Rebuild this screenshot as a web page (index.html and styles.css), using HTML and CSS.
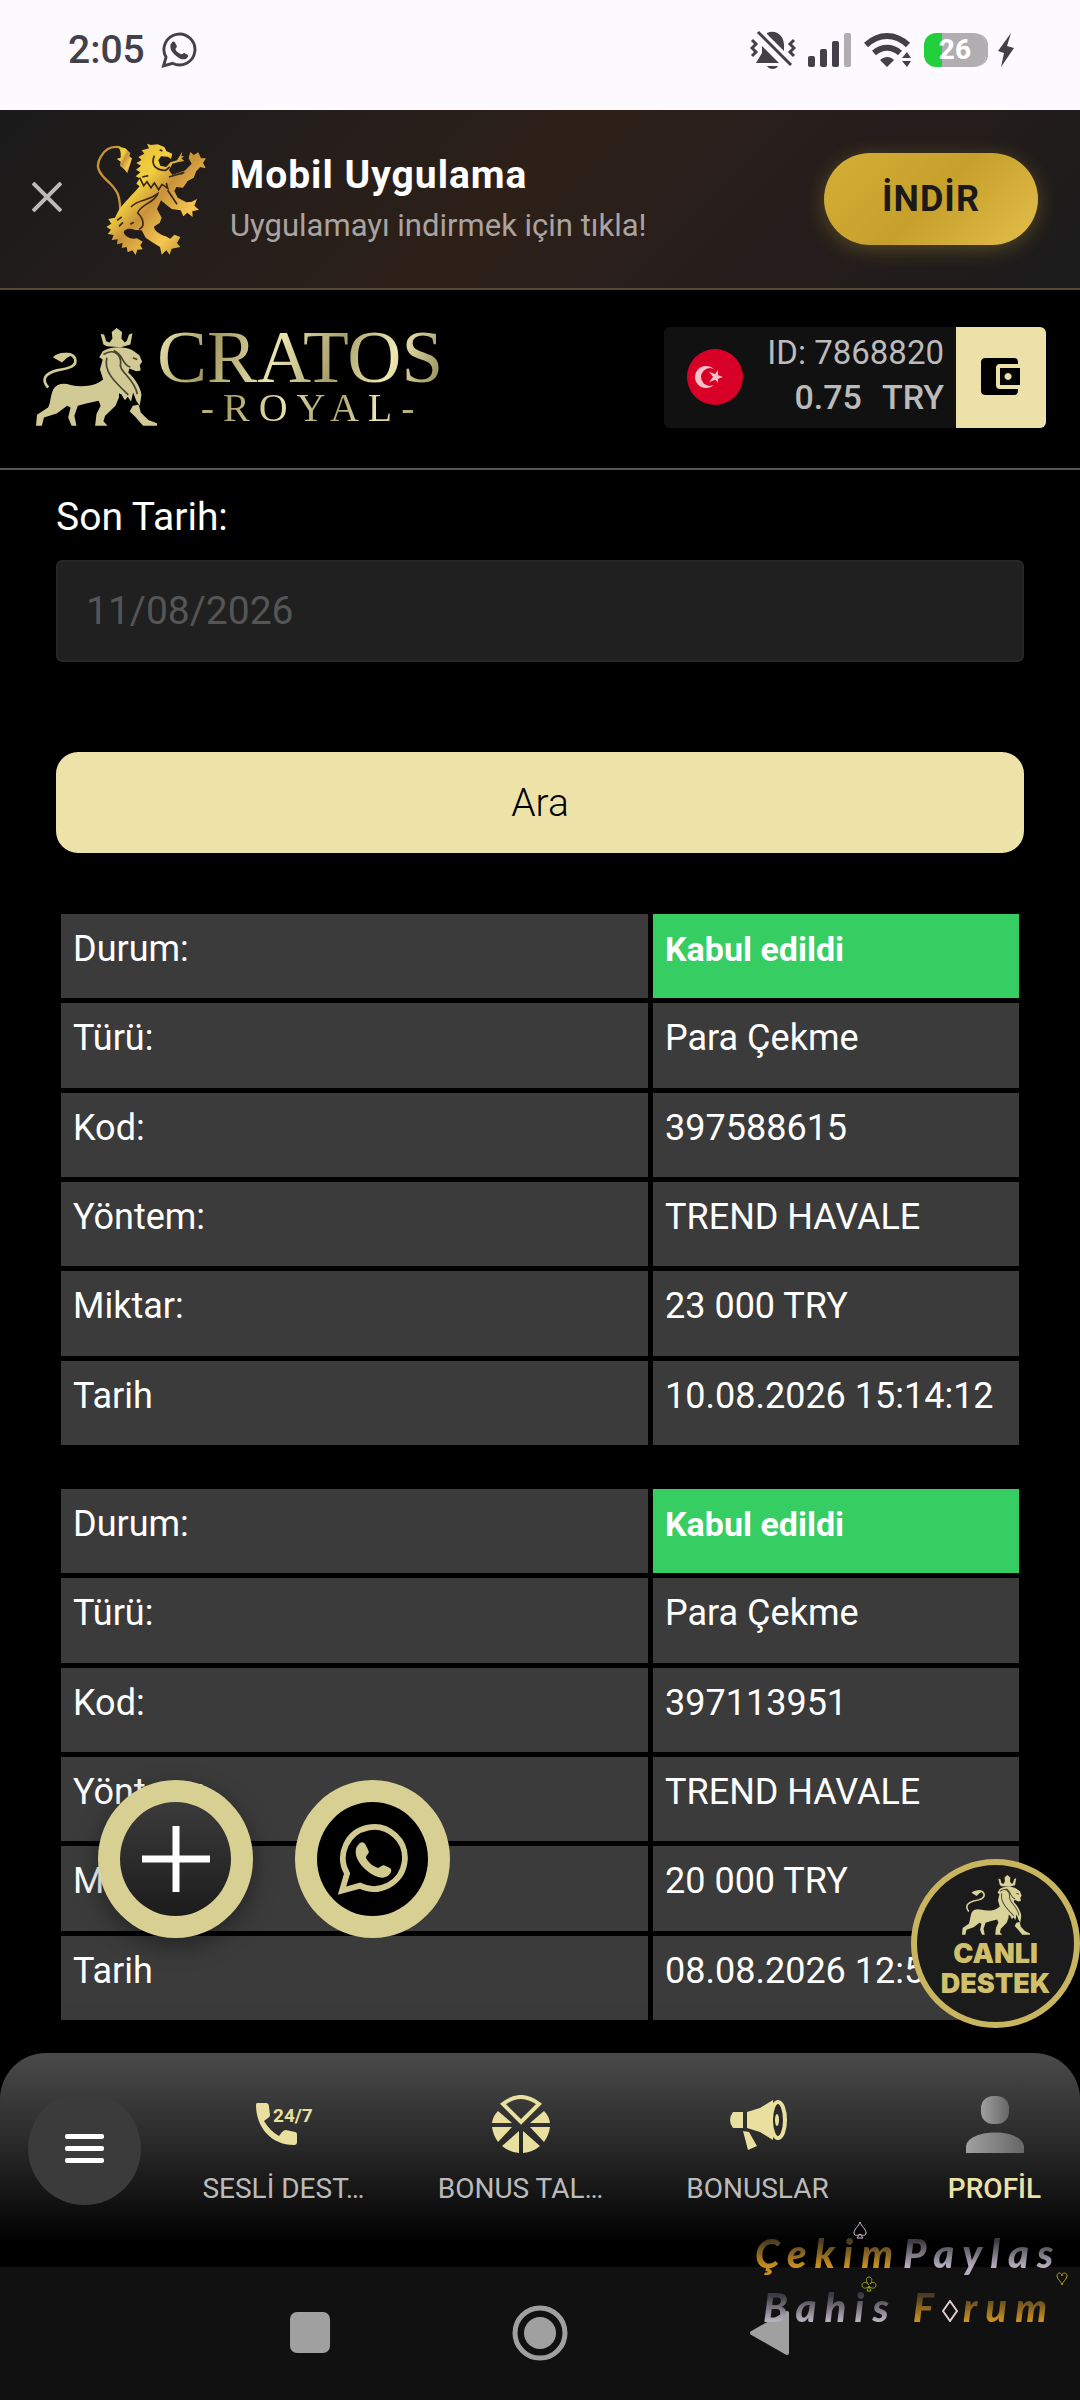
FILE: index.html
```html
<!DOCTYPE html>
<html lang="tr">
<head>
  <meta charset="UTF-8" />
  <meta name="viewport" content="width=device-width, initial-scale=1.0"/>
  <title>Cratos Royal - Profil</title>
  <link rel="stylesheet" href="styles.css">
</head>
<body>
  <!-- shared shapes -->
  <svg class="defs" width="0" height="0" aria-hidden="true">
    <defs>
      <linearGradient id="gold" x1="0" y1="0" x2="1" y2="1">
        <stop offset="0" stop-color="#d9a93a"/>
        <stop offset="0.35" stop-color="#f3d03f"/>
        <stop offset="0.5" stop-color="#c8923a"/>
        <stop offset="0.72" stop-color="#f6c850"/>
        <stop offset="1" stop-color="#9c6f28"/>
      </linearGradient>
      <linearGradient id="grey" x1="0" y1="0" x2="1" y2="0">
        <stop offset="0" stop-color="#a0a0a0"/>
        <stop offset="1" stop-color="#666"/>
      </linearGradient>
      <symbol id="lion" viewBox="105 110 350 296" preserveAspectRatio="none">
        <path d="M292 128L302 130L308 150L318 154L326 142L324 122L338 110L354 122L352 142L362 154L368 148L374 130L384 126L378 160L350 168L310 165L300 160Z"/>
        <path d="M298 180C320 166 360 164 385 178L404 192L412 212L405 222L408 238L395 241L375 232L372 245C390 260 408 290 410 312L405 345L395 330L386 305L380 332L370 318L362 328L352 310L335 303L315 288L300 268L290 235L298 205L288 198Z"/>
        <path d="M300 265C280 285 240 290 205 282C185 275 165 278 155 295C145 320 148 335 140 350L108 372L105 405L122 405L128 380L165 368L195 345L205 350L198 380L208 405L222 405L216 375L226 345L250 338L286 330L292 345L280 370L276 405L312 405L300 392L305 375L335 345L345 320L345 305Z"/>
        <path d="M385 345L402 342L408 365L430 388L455 398V405H415L392 378L376 362Z"/>
        <path d="M140 290C120 265 130 248 165 238C200 232 225 225 218 203C213 190 200 187 185 190" fill="none" stroke="currentColor" stroke-width="8"/>
        <path d="M154 198C165 186 190 180 212 190L195 200L180 214Z"/>
        <path d="M300 190C330 170 350 190 350 215C340 240 390 260 398 310M310 200C300 240 330 270 372 312M330 178C360 190 352 222 378 228M385 200L398 205" fill="none" stroke="#000" stroke-opacity=".65" stroke-width="5"/>
      </symbol>
      <symbol id="whatsapp" viewBox="0 0 100 100">
        <path d="M7 94L14 70A43 43 0 1 1 32 87Z" fill="none" stroke="currentColor" stroke-width="8"/>
        <path d="M30 30C33 25 38 26 40 31L44 39C45 43 40 45 40 48C44 56 50 60 56 62C60 63 62 57 66 59L74 63C78 66 73 75 64 76C50 77 25 56 26 40C26 36 27 33 30 30Z"/>
      </symbol>
    </defs>
  </svg>

  <div class="status-bar">
    <span class="time">2:05</span>
    <svg width="36" height="36"><use href="#whatsapp"/></svg>
    <div class="status-icons">
      <svg width="46" height="40" viewBox="0 0 46 40">
        <path d="M6 33L12 23V16L29 33ZM17 3C26 -1 34 6 34 15V21L17 4Z"/>
        <path d="M17 36H28C26 40 19 40 17 36Z"/>
        <path d="M8 2L41 35M2 10L6 14L2 18L6 22L2 26M44 10L40 14L44 18L40 22L44 26" fill="none" stroke="currentColor" stroke-width="3"/>
      </svg>
      <svg width="44" height="36" viewBox="0 0 44 36">
        <rect x="0" y="24" width="7" height="11" rx="2"/>
        <rect x="12" y="17" width="7" height="18" rx="2"/>
        <rect x="24" y="9" width="7" height="26" rx="2"/>
        <rect x="36" y="1" width="7" height="34" rx="2" fill="#b0adb3"/>
      </svg>
      <svg width="48" height="36" viewBox="0 0 48 36">
        <path d="M2 13C15 1 31 1 44 13M10 21C18 14 28 14 36 21" fill="none" stroke="currentColor" stroke-width="6"/>
        <path d="M16 28C21 24 26 24 30 28L23 35ZM38 26L43 20L47 26ZM38 29L43 35L47 29Z"/>
      </svg>
      <div class="battery"><span>26</span></div>
      <svg width="16" height="34" viewBox="0 0 16 34"><path d="M13 0L0 18L6 20L3 34L16 15L9 13Z"/></svg>
    </div>
  </div>

  <div class="app-banner">
    <button class="close" type="button" aria-label="Kapat">
      <svg width="30" height="30" viewBox="0 0 30 30"><path d="M1 1L29 29M29 1L1 29" fill="none" stroke="currentColor" stroke-width="4"/></svg>
    </button>
    <svg class="banner-lion" width="112" height="112" viewBox="48 38 334 336">
      <path d="M120 240C118 195 112 182 88 158C50 125 45 105 62 78C75 55 95 46 120 51" fill="none" stroke="#c69335" stroke-width="7"/>
      <g fill="url(#gold)">
        <path d="M112 48L135 54L150 68L147 78L155 84L149 104L141 129L133 118L119 106L121 94L109 85L121 82C122 70 121 58 112 48Z"/>
        <path d="M200 40L212 44L232 42L252 50L258 62L276 70L272 86L262 79L242 78L234 90L240 106L258 110L270 96L290 90L306 64L303 78L312 78L303 84L312 92L292 96L276 100L266 120L276 134L315 120L334 100L325 84L330 65L340 74L354 66L362 84L377 84L368 97L376 114L360 110L348 122L340 142L322 152L308 172L288 170L282 182L292 202L318 216L334 214L350 206L342 226L356 238L336 243L337 260L321 247L309 258L301 240L274 236L256 222L242 210L230 236L244 262L238 278L222 288C218 298 235 312 256 318L270 325L282 313L300 320L290 338L300 350L274 355L268 373L258 360L244 373L239 350L216 336L196 322L184 300L165 299C148 292 132 296 130 306C134 320 152 328 170 324L187 334L180 345L187 357L171 358L166 374L156 360L142 366L139 350L124 353L127 338L110 342L112 327L94 329L100 314L82 311L92 298L78 290L93 280L84 266L104 262L115 240C130 218 155 195 178 168L168 160L178 144L166 138L180 126L167 118L182 106L168 98L184 89L174 80L192 70L184 60L206 54Z"/>
      </g>
      <path d="M222 76C210 105 228 120 256 120L268 110M178 142L190 166L200 154L212 172L222 158L235 178L245 162L262 174L258 158M266 140L312 126L300 132M152 230C175 205 200 215 232 190C225 216 180 222 172 248C190 265 195 290 176 297M110 270L124 260M116 288L128 276M150 282L160 276M238 58L246 62M186 140L204 136M262 180L290 222" fill="none" stroke="#3a2812" stroke-width="5"/>
    </svg>
    <div class="banner-text">
      <strong>Mobil Uygulama</strong>
      <span>Uygulamayı indirmek için tıkla!</span>
    </div>
    <button class="download" type="button">İNDİR</button>
  </div>

  <header class="header">
    <a class="logo" href="#">
      <svg width="121" height="98"><use href="#lion"/></svg>
      <span class="logo-text">
        <span class="logo-name">CRATOS</span>
        <span class="logo-sub">-ROYAL-</span>
      </span>
    </a>
    <div class="account">
      <svg width="56" height="56" viewBox="0 0 56 56">
        <circle cx="28" cy="28" r="28" fill="#d80027"/>
        <circle cx="19" cy="28" r="11" fill="#f6c3cb"/>
        <circle cx="23" cy="28" r="9" fill="#d80027"/>
        <path d="M33 28L25 25L30 31V24L25 31Z" fill="#f6c3cb" stroke="#f6c3cb" stroke-width="2"/>
      </svg>
      <div class="account-info">
        <span>ID: 7868820</span>
        <span class="balance"><b>0.75</b><b>TRY</b></span>
      </div>
      <button class="wallet" type="button" aria-label="Cüzdan">
        <svg width="40" height="38" viewBox="0 0 40 38">
          <path fill-rule="evenodd" d="M5 0H33Q37 0 37 4V6H19Q15 6 15 10V27Q15 31 19 31H37V33Q37 37 33 37H5Q0 37 0 33V4Q0 0 5 0ZM19 10H39V27H19ZM27 15A3.500 3.500 0 1 0 27.100 15Z"/>
        </svg>
      </button>
    </div>
  </header>

  <main class="content">
    <form>
      <label for="sonTarih">Son Tarih:</label>
      <input type="text" id="sonTarih" value="11/08/2026" />
      <button class="search" type="submit">Ara</button>
    </form>

    <table class="record">
      <tr><th scope="row">Durum:</th><td class="accepted">Kabul edildi</td></tr>
      <tr><th scope="row">Türü:</th><td>Para Çekme</td></tr>
      <tr><th scope="row">Kod:</th><td>397588615</td></tr>
      <tr><th scope="row">Yöntem:</th><td>TREND HAVALE</td></tr>
      <tr><th scope="row">Miktar:</th><td>23 000 TRY</td></tr>
      <tr><th scope="row">Tarih</th><td>10.08.2026 15:14:12</td></tr>
    </table>

    <table class="record">
      <tr><th scope="row">Durum:</th><td class="accepted">Kabul edildi</td></tr>
      <tr><th scope="row">Türü:</th><td>Para Çekme</td></tr>
      <tr><th scope="row">Kod:</th><td>397113951</td></tr>
      <tr><th scope="row">Yöntem:</th><td>TREND HAVALE</td></tr>
      <tr><th scope="row">Miktar:</th><td>20 000 TRY</td></tr>
      <tr><th scope="row">Tarih</th><td>08.08.2026 12:5</td></tr>
    </table>
  </main>

  <nav class="bottom-nav">
    <button class="menu" type="button" aria-label="Menü">
      <svg width="39" height="30" viewBox="0 0 39 30"><rect width="39" height="5" rx="2"/><rect y="12" width="39" height="5" rx="2"/><rect y="24" width="39" height="5" rx="2"/></svg>
    </button>
    <a href="#">
      <svg width="58" height="58" viewBox="0 0 58 58">
        <path d="M2 8H11Q14 8 14 12L15 20Q15 22 13 23L9 26Q15 36 24 41L27 37Q29 35 31 35L40 37Q42 37 42 40V47Q42 50 39 50C16 50 1 32 1 10Q1 8 2 8Z"/>
        <text x="18" y="27" class="hours">24/7</text>
      </svg>
      <span>SESLİ DEST…</span>
    </a>
    <a href="#">
      <svg width="58" height="58" viewBox="0 0 58 58">
        <path d="M11 9Q29 -5 47 9L29 27Z" fill="none" stroke="currentColor" stroke-width="4"/>
        <path d="M6 16L20 28H0Q1 21 6 16ZM52 16L38 28H58Q57 21 52 16ZM0 32H20L6 47Q1 40 0 32ZM58 32H38L52 47Q57 40 58 32ZM10 51L27 36V58Q17 57 10 51ZM48 51L31 36V58Q41 57 48 51Z"/>
      </svg>
      <span>BONUS TAL…</span>
    </a>
    <a href="#">
      <svg width="58" height="58" viewBox="0 0 58 58">
        <path d="M4 17H14V33H4Q-2 25 4 17ZM18 17L31 13L44 5V45L31 37L18 33ZM14 36L20 37L28 51L19 55Z"/>
        <ellipse cx="49" cy="25" rx="7" ry="18" fill="#292927" stroke="currentColor" stroke-width="4"/>
        <ellipse cx="48" cy="25" rx="2" ry="6"/>
      </svg>
      <span>BONUSLAR</span>
    </a>
    <a class="active" href="#">
      <svg width="58" height="58" viewBox="0 0 58 58">
        <rect x="15" y="1" width="28" height="28" rx="12" fill="url(#grey)"/>
        <path d="M0 58V51C3 33 55 33 58 51V58Z" fill="url(#grey)"/>
      </svg>
      <span>PROFİL</span>
    </a>
  </nav>

  <div class="system-nav">
    <svg width="56" height="56" viewBox="0 0 56 56"><rect x="8" y="7" width="40" height="41" rx="7"/></svg>
    <svg width="56" height="56" viewBox="0 0 56 56"><circle cx="28" cy="28" r="25" fill="none" stroke="currentColor" stroke-width="5"/><circle cx="28" cy="28" r="16"/></svg>
    <svg width="56" height="56" viewBox="0 0 56 56"><path d="M10 28L45 8V48Z" stroke="currentColor" stroke-width="4" stroke-linejoin="round"/></svg>
  </div>

  <!-- floating buttons -->
  <div class="floating">
    <button class="round plus" type="button" aria-label="Ekle">
      <svg width="68" height="66" viewBox="0 0 68 66"><path d="M0 33H68M34 0V66" stroke="#fff" stroke-width="7"/></svg>
    </button>
    <a class="round chat" href="#" aria-label="WhatsApp">
      <svg width="72" height="72"><use href="#whatsapp"/></svg>
    </a>
  </div>
  <a class="support" href="#">
    <svg width="68" height="60"><use href="#lion"/></svg>
    <span>CANLI</span>
    <span>DESTEK</span>
  </a>

  <!-- forum mark with the four card suits -->
  <div class="watermark">
    <div class="line">
      <span class="word amber">Çekim</span>
      <span class="word silver">Paylas</span>
      <svg class="suit spade" width="14" height="18" viewBox="0 0 14 18"><path d="M7 1C8 5 13 8 13 12C13 15 9 15 7 13C5 15 1 15 1 12C1 8 6 5 7 1ZM7 13L4 17H10Z"/></svg>
      <svg class="suit heart" width="12" height="14" viewBox="0 0 12 14"><path d="M6 13C5 9 1 7 1 4C1 0 6 0 6 4C6 0 11 0 11 4C11 7 7 9 6 13Z"/></svg>
    </div>
    <div class="line second">
      <span class="word silver">Bahis</span>
      <span class="forum"><span class="word amber">F</span><svg class="diamond" width="16" height="22" viewBox="0 0 16 22"><path d="M8 1L15 11L8 21L1 11Z"/></svg><span class="word amber">rum</span></span>
      <svg class="suit club" width="16" height="16" viewBox="0 0 16 16"><path d="M8 9C4 5 5 1 8 1C11 1 12 5 9 8C12 5 15 7 15 9C15 13 10 13 8 10C6 13 1 13 1 9C1 7 4 5 7 8M8 10L6 15H10Z"/></svg>
    </div>
  </div>
</body>
</html>
```
FILE: styles.css
```css
* {
  box-sizing: border-box;
}
body {
  margin: 0;
  min-height: 100vh;
  display: flex;
  flex-direction: column;
  font-family: Roboto, "Noto Sans", sans-serif;
  background: #000;
  color: #fff;
}
svg {
  display: block;
  flex-shrink: 0;
  fill: currentColor;
}
.defs {
  position: absolute;
}
button {
  border: none;
  padding: 0;
  font-family: inherit;
  cursor: pointer;
}
a {
  color: inherit;
  text-decoration: none;
}

/* status bar */
.status-bar {
  height: 110px;
  padding: 0 66px 10px 68px;
  display: flex;
  align-items: center;
  gap: 16px;
  background: #fcf9ff;
  color: #434147;
}
.time {
  font-size: 39px;
  font-weight: 500;
}
.status-icons {
  margin-left: auto;
  display: flex;
  align-items: center;
  gap: 12px;
}
.battery {
  width: 62px;
  height: 34px;
  border-radius: 12px;
  background: linear-gradient(90deg, #22cf3c 18px, #b0adb3 18px);
  box-shadow: 3px 0 0 -1px #b0adb3;
  color: #fff;
  font-size: 28px;
  font-weight: 800;
  line-height: 34px;
  text-align: center;
}

/* app banner */
.app-banner {
  height: 180px;
  padding: 0 42px 0 32px;
  display: flex;
  align-items: center;
  border-bottom: 2px solid #584832;
  background: linear-gradient(135deg, #1a1a1a 0%, #241e1c 25%, #2d2018 48%, #281e1c 65%, #1b1b1b 100%);
}
.close {
  margin-bottom: 4px;
  background: none;
  color: #bbb;
}
.banner-lion {
  margin: 0 22px 0 34px;
}
.banner-text {
  flex: 1;
  display: flex;
  flex-direction: column;
  gap: 8px;
}
.banner-text strong {
  font-size: 39px;
  line-height: 46px;
  letter-spacing: 1px;
}
.banner-text span {
  font-size: 31px;
  line-height: 40px;
  color: #aaa3a0;
}
.download {
  width: 214px;
  height: 92px;
  border-radius: 46px;
  background: linear-gradient(135deg, #d4af37, #c6a02b 50%, #e4be4a);
  box-shadow: 0 4px 20px rgba(212, 175, 55, 0.3);
  color: #1a1a1a;
  font-size: 36px;
  font-weight: bold;
  letter-spacing: 1px;
}

/* header */
.header {
  height: 180px;
  padding: 0 34px 4px 36px;
  display: flex;
  align-items: center;
  justify-content: space-between;
  border-bottom: 2px solid #555;
}
.logo {
  display: flex;
  align-items: center;
  color: #d2ca94;
}
.logo-text {
  display: flex;
  flex-direction: column;
  align-items: center;
  font-family: "Liberation Serif", serif;
}
.logo-name,
.logo-sub {
  color: transparent;
  background: linear-gradient(110deg, #eee8b0, #a39a62 20%, #e9e3ae 42%, #a89e6a 62%, #efe8b2 80%, #8f8754);
  background-clip: text;
}
.logo-name {
  font-size: 75px;
  line-height: 62px;
}
.logo-sub {
  padding-left: 24px;
  font-size: 40px;
  line-height: 40px;
  letter-spacing: 9px;
}
.account {
  height: 101px;
  display: flex;
  align-items: center;
  padding-left: 23px;
  border-radius: 6px;
  background: #111;
  overflow: hidden;
}
.account-info {
  margin: 0 12px 4px 24px;
  text-align: right;
  font-size: 33px;
  line-height: 45px;
  color: #bbb;
}
.balance {
  display: flex;
  justify-content: flex-end;
  gap: 20px;
  font-size: 34px;
}
.balance b {
  font-weight: 500;
}
.wallet {
  width: 90px;
  height: 100%;
  display: grid;
  place-items: center;
  background: #ece2a9;
  color: #000;
}

/* content */
.content {
  flex: 1;
  padding: 24px 56px 28px;
}
label {
  display: block;
  margin-bottom: 20px;
  font-size: 39px;
  line-height: 46px;
}
input {
  display: block;
  width: 100%;
  height: 102px;
  padding: 0 28px;
  border: 2px solid #262626;
  border-radius: 6px;
  background: #202020;
  color: #555;
  font-family: inherit;
  font-size: 39px;
}
.search {
  width: 100%;
  height: 101px;
  margin: 90px 0 56px;
  display: block;
  border-radius: 22px;
  background: #ede3a9;
  color: #000;
  font-size: 39px;
  font-weight: 300;
}
.record {
  width: 100%;
  height: 541px;
  border-spacing: 5px;
  table-layout: fixed;
}
.record + .record {
  margin-top: 34px;
}
.record th,
.record td {
  padding: 12px 12px 26px;
  background: #3b3b3b;
  font-size: 36px;
  font-weight: normal;
  line-height: 46px;
  text-align: left;
  vertical-align: top;
  white-space: nowrap;
}
.record td {
  width: 366px;
}
.record .accepted {
  background: #36cd63;
  font-size: 34px;
  font-weight: bold;
}

/* bottom navigation */
.bottom-nav {
  height: 214px;
  padding: 0 0 0 28px;
  display: flex;
  gap: 72px;
  border-radius: 46px 46px 0 0;
  background: linear-gradient(#4a4a4a, #2b2b2b 40%, #000 90%);
  box-shadow: 0 0 40px rgba(0, 0, 0, 0.5);
  color: #bbb;
}
.menu {
  width: 113px;
  height: 113px;
  margin: 39px -12px 0 0;
  flex-shrink: 0;
  display: grid;
  place-items: center;
  border-radius: 50%;
  background: #3b3b3b;
  color: #fff;
}
.bottom-nav a {
  width: 165px;
  padding-top: 42px;
  flex-shrink: 0;
  display: flex;
  flex-direction: column;
  align-items: center;
  gap: 19px;
  font-size: 28px;
  line-height: 34px;
  white-space: nowrap;
}
.bottom-nav a svg {
  color: #e9e09f;
}
.bottom-nav .active {
  color: #ece2a9;
  font-weight: 500;
}
.hours {
  font-size: 19px;
  font-weight: bold;
}
.system-nav {
  height: 133px;
  padding-bottom: 1px;
  display: flex;
  align-items: center;
  justify-content: center;
  gap: 174px;
  background: #111;
  color: #a0a0a0;
}

/* floating buttons */
.floating {
  position: fixed;
  left: 98px;
  bottom: 462px;
  display: flex;
  gap: 42px;
}
.round {
  width: 155px;
  height: 158px;
  display: grid;
  place-items: center;
  border: 22px solid #d8d093;
  border-radius: 50%;
}
.plus {
  background: linear-gradient(#3b3b3b, #1c1c1c);
  box-shadow: 0 8px 24px rgba(0, 0, 0, 0.4);
}
.chat {
  background: #000;
  color: #d2c990;
}
.support {
  position: fixed;
  right: 0;
  bottom: 372px;
  width: 169px;
  height: 169px;
  padding-top: 10px;
  display: flex;
  flex-direction: column;
  align-items: center;
  border: 6px solid #c9b560;
  border-radius: 50%;
  background: #1b1b1b;
  color: #d0c06c;
  font-family: Inter, sans-serif;
  font-size: 27px;
  font-weight: 900;
  line-height: 30px;
}
.support svg {
  margin-bottom: 4px;
  color: #d9d39a;
}

/* watermark */
.watermark {
  position: fixed;
  right: 0;
  bottom: 66px;
  width: 325px;
  font-family: Lato, sans-serif;
  font-size: 40px;
  font-style: italic;
  font-weight: 900;
  line-height: 54px;
  white-space: nowrap;
  pointer-events: none;
}
.line {
  position: relative;
  display: flex;
  gap: 2px;
  letter-spacing: 8px;
}
.line.second {
  padding-left: 8px;
  gap: 16px;
}
.forum {
  display: flex;
  align-items: center;
}
.word {
  color: transparent;
  background-clip: text;
}
.amber {
  background-image: linear-gradient(#4a3c20 28%, #c98f22 75%);
}
.silver {
  background-image: linear-gradient(#3c3a40 28%, #b5afbd 75%);
}
.suit,
.diamond {
  fill: none;
  stroke: currentColor;
  stroke-width: 1;
}
.suit {
  position: absolute;
}
.spade {
  left: 98px;
  top: -5px;
  color: #d6c4cc;
}
.heart {
  right: 12px;
  top: 46px;
  color: #a5a316;
}
.club {
  left: 106px;
  top: -4px;
  color: #98a316;
}
.diamond {
  margin: 8px 5px 0 0;
  color: #e0cdd0;
  stroke-width: 2;
}
```
